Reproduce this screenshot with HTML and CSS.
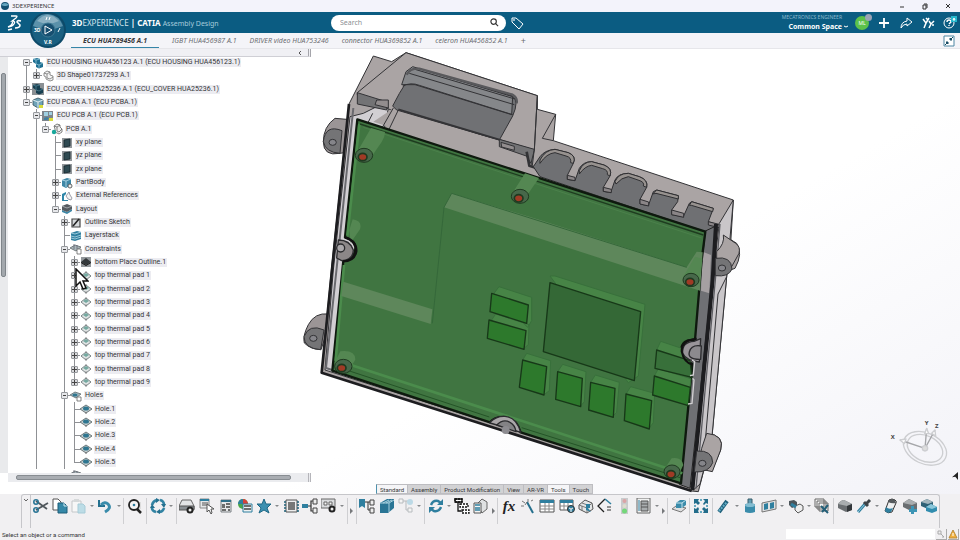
FILE: index.html
```html
<!DOCTYPE html>
<html lang="en">
<head>
  <meta charset="UTF-8" />
  <meta name="viewport" content="width=device-width, initial-scale=1.0"/>
  <title>3DEXPERIENCE</title>
  <link rel="stylesheet" href="styles.css">
</head>
<body>
  <!-- Icon sprite -->
  <svg class="sprite" aria-hidden="true">
    <symbol id="t-cubes" viewBox="0 0 12 12"><path d="M1 2l4-1 3 1v3l3 1v4l-4 1.500-3-1.500V7L1 5z" fill="#1d6f92"/><path d="M1 2l3 1 4-1M4 3v4l3 1 4-2M7 8v3" fill="none" stroke="#8fc3d6" stroke-width=".8"/></symbol>
    <symbol id="t-cubes-dark" viewBox="0 0 12 12"><path d="M0 0h12v12H0z" fill="#8b9094"/><path d="M1 2l4-1 3 1v3l3 1v4l-4 1.500-3-1.500V7L1 5z" fill="#173f50"/><path d="M1 2l3 1 4-1M4 3v4l3 1 4-2" fill="none" stroke="#4d7f91" stroke-width=".8"/></symbol>
    <symbol id="t-shape" viewBox="0 0 12 12"><path d="M2 3l3-2 3 1v3l3 1v4l-3 1-4-2V7L2 6z" fill="#f4f4f4" stroke="#777" stroke-width=".8"/><path d="M2 3l3 1 3-2M5 4v4l3 1 3-2" fill="none" stroke="#777" stroke-width=".8"/></symbol>
    <symbol id="t-asm" viewBox="0 0 12 12"><path d="M1 3l5-2 5 2v5l-5 3-5-3z" fill="#6fa3b8" stroke="#35525e" stroke-width=".8"/><path d="M1 3l5 2 5-2M6 5v6" fill="none" stroke="#e8f2f5" stroke-width=".9"/><path d="M7 8h4v3H7z" fill="#d8dc3c"/></symbol>
    <symbol id="t-pcb" viewBox="0 0 12 12"><path d="M0 1h11v10H0z" fill="#7d858c"/><path d="M2 2h4v4H2zM7 2h3v3H7z" fill="#9fd0e2"/><path d="M2 8l3-1 2 1-2 2H2z" fill="#3f7fa0"/><path d="M7 8h4v3H7z" fill="#d8dc3c"/></symbol>
    <symbol id="t-part" viewBox="0 0 12 12"><path d="M3 3l3-2 3 1v2l2 2v3l-3 2-4-2V6z" fill="#eee" stroke="#666" stroke-width=".8"/><path d="M3 3l3 1 3-2M6 4v4l2 1 3-3" fill="none" stroke="#666" stroke-width=".8"/><circle cx="3" cy="9" r="2.200" fill="#18a79b"/></symbol>
    <symbol id="t-plane" viewBox="0 0 12 12"><path d="M1 1h10v10H1z" fill="#92979b"/><path d="M3 3l6-1v7l-6 1z" fill="#2f4a52" stroke="#14262c" stroke-width=".8"/></symbol>
    <symbol id="t-body" viewBox="0 0 12 12"><path d="M1 3l5-2 4 1v6l-5 3-4-2z" fill="#3e87a6"/><path d="M1 3l4 1 5-2M5 4v6" fill="none" stroke="#bfe0ec" stroke-width=".8"/><circle cx="9" cy="9" r="2" fill="#eee" stroke="#555" stroke-width=".9"/></symbol>
    <symbol id="t-ext" viewBox="0 0 12 12"><path d="M1 4l4-2v2L3 6v4h4v1H1z" fill="#2f86a8"/><path d="M5 6l3-4 1 3 2 3-1 2-3-1z" fill="#f2f2f2" stroke="#778" stroke-width=".7"/></symbol>
    <symbol id="t-stack" viewBox="0 0 12 12"><path d="M1 7l5 2 5-3v2l-5 3-5-2z" fill="#3e87a6"/><path d="M1 3l5-2 5 2v3L6 9 1 7z" fill="#555b60"/><path d="M1 3l5 2 5-2" fill="none" stroke="#a8adb1" stroke-width=".9"/></symbol>
    <symbol id="t-sketch" viewBox="0 0 12 12"><path d="M2 2h8v8H2z" fill="#d6d9db" stroke="#444" stroke-width="1.200"/><path d="M3 9l6-7" stroke="#222" stroke-width="1.600"/></symbol>
    <symbol id="t-layer" viewBox="0 0 12 12"><path d="M1 3l6-2 4 1v7l-6 2-4-1z" fill="#2f7f9f"/><path d="M1 3l4 1 6-2M1 6l4 1 6-2M1 8l4 1 6-2" fill="none" stroke="#b5dbe8" stroke-width=".8"/></symbol>
    <symbol id="t-cons" viewBox="0 0 12 12"><path d="M0 5l5-3 6 2-5 4z" fill="#a9b6b8" stroke="#5e6769" stroke-width=".8"/><path d="M4 1v5M7 2v4" stroke="#667" stroke-width=".8"/><path d="M7 6h4v5H7z" fill="#fff" stroke="#666" stroke-width=".8"/></symbol>
    <symbol id="t-place" viewBox="0 0 12 12"><path d="M1 1h10v10H1z" fill="#92979b"/><path d="M1 6l5-4 5 4-5 3z" fill="#33383b"/><path d="M1 6v1l5 3 5-3V6L6 9z" fill="#111"/></symbol>
    <symbol id="t-pad" viewBox="0 0 12 12"><path d="M1 6l5-4 5 4-5 4z" fill="#dfe3e3" stroke="#6d7779" stroke-width=".9"/><path d="M3 5l3-2 3 2-3 2z" fill="#74a8a0"/><path d="M6 1v2M6 8v3" stroke="#888" stroke-width=".8"/></symbol>
    <symbol id="t-hole" viewBox="0 0 12 12"><path d="M0 6l6-4 6 4-6 4z" fill="#c3cccd" stroke="#5f6b6e" stroke-width=".9"/><ellipse cx="6" cy="5.500" rx="3" ry="2" fill="#2f7690"/><path d="M6 9v2" stroke="#777"/></symbol>
    <symbol id="t-holes" viewBox="0 0 12 12"><path d="M0 5l5-3 6 2-5 4z" fill="#9fb6bd" stroke="#5f6b6e" stroke-width=".8"/><ellipse cx="5" cy="5" rx="2.500" ry="1.500" fill="#2f7690"/><path d="M7 7h4v4H7z" fill="#fff" stroke="#666" stroke-width=".8"/></symbol>

    <symbol id="cut" viewBox="0 0 16 16"><path d="M3 3l11 8M3 12l12-7" stroke="#50575c" stroke-width="1.800"/><circle cx="3" cy="4" r="2.200" fill="none" stroke="#2a7595" stroke-width="1.600"/><circle cx="3" cy="12" r="2.200" fill="none" stroke="#2a7595" stroke-width="1.600"/></symbol>
    <symbol id="copy" viewBox="0 0 16 16"><path d="M1 1h5l3 3v8H1z" fill="#fff" stroke="#555" /><path d="M6 5h6l3 3v7H6z" fill="#3588a8" stroke="#1d5d78"/><path d="M12 5v3h3" fill="none" stroke="#cfe7ef"/></symbol>
    <symbol id="paste" viewBox="0 0 16 16"><path d="M1 3h9v11H1z" fill="#f7f7f7" stroke="#c4c7c9"/><path d="M3 1h5v3H3z" fill="#d6d9da"/><path d="M7 6h5l2 2v7H7z" fill="#bcdce6" stroke="#a6cbd7"/></symbol>
    <symbol id="undo" viewBox="0 0 16 16"><path d="M2 2v6h6" fill="none" stroke="#24708f" stroke-width="2"/><path d="M4 7q4-4 7-1 4 4-3 8" fill="none" stroke="#3a8cab" stroke-width="3"/></symbol>
    <symbol id="find" viewBox="0 0 16 16"><path d="M10 4h4v7h-4z" fill="#ddd"/><circle cx="7" cy="7" r="5" fill="#f4f4f4" stroke="#222" stroke-width="1.800"/><path d="M10 11l4 4" stroke="#222" stroke-width="2.500"/><circle cx="7" cy="7" r="1.300" fill="#2d7c9c"/></symbol>
    <symbol id="sync" viewBox="0 0 16 16"><path d="M2 7q1-4 5-5M10 2q4 1 4 5M14 10q-1 4-5 4M6 14q-4-1-4-4" fill="none" stroke="#3283a3" stroke-width="2.600"/><path d="M6 0l4 2-4 3zM11 6h5l-2 4zM10 11v5l-4-2zM0 10h5L2 6z" fill="#24708f"/></symbol>
    <symbol id="disk" viewBox="0 0 16 16"><path d="M3 2h9l3 6v3H0V8z" fill="#e3e4e6" stroke="#666"/><path d="M0 8h15v4H0z" fill="#8b9094" stroke="#555"/><circle cx="11" cy="12" r="2.500" fill="#eee" stroke="#222" stroke-width="2"/></symbol>
    <symbol id="select" viewBox="0 0 16 16"><path d="M1 1h9v9H1z" fill="#e6e8e9" stroke="#888"/><path d="M1 1h9v2H1z" fill="#2f7f9f"/><path d="M3 5h6M3 7h6" stroke="#555"/><path d="M8 6v8l2-2 2 4 1-1-1-4h3z" fill="#fff" stroke="#555"/></symbol>
    <symbol id="calc" viewBox="0 0 16 16"><path d="M3 2h10v12H3z" fill="#e7e8ea" stroke="#7b8084"/><path d="M3 2h10v2H3z" fill="#2f6f8a"/><path d="M4 7h3M8 6h4M4 9h3M8 9h4M4 12h4M10 12h2" stroke="#444" stroke-width="1.500"/></symbol>
    <symbol id="color" viewBox="0 0 16 16"><circle cx="6" cy="6" r="5" fill="#4aa648"/><path d="M6 6V1a5 5 0 0 1 5 5z" fill="#d8413a"/><path d="M6 6H1a5 5 0 0 1 5-5z" fill="#2f7f9f"/><path d="M6 6h9v8H6z" fill="#eef1f2" stroke="#2f7f9f"/><path d="M7 8h7M7 11h7" stroke="#444" stroke-width="1.500"/></symbol>
    <symbol id="star" viewBox="0 0 16 16"><path d="M8 1l2 5h5l-4 4 2 5-5-3-5 3 2-5-4-4h5z" fill="#3b8fb0" stroke="#1f6885"/></symbol>
    <symbol id="chip" viewBox="0 0 16 16"><path d="M3 2h11v12H3z" fill="#eee" stroke="#555"/><path d="M5 4h7v8H5z" fill="#777"/><path d="M2 3v11M15 3v11" stroke="#1f6078" stroke-width="1.500" stroke-dasharray="2 1"/></symbol>
    <symbol id="link" viewBox="0 0 16 16"><path d="M6 8h3V3h2M9 8v5h2" fill="none" stroke="#333" stroke-width="1.200"/><path d="M11 1h4v5h-4zM11 10h4v5h-4z" fill="#eee" stroke="#444"/><path d="M0 6h6v4H0z" fill="#2f7f9f"/></symbol>
    <symbol id="board" viewBox="0 0 16 16"><path d="M0 1h14v9H0z" fill="#dadcde" stroke="#666"/><path d="M3 4h3v3H3zM8 4h3v3H8z" fill="#f5f5f5" stroke="#666"/><circle cx="11" cy="11" r="2.500" fill="#eee" stroke="#222" stroke-width="2"/></symbol>
    <symbol id="treeflag" viewBox="0 0 16 16"><path d="M0 1h6v9l-3-2-3 2z" fill="#2f7f9f"/><path d="M6 4h6M9 4v8h3" fill="none" stroke="#333"/><path d="M11 2h4v5h-4zM11 10h4v5h-4z" fill="#eee" stroke="#444"/></symbol>
    <symbol id="books" viewBox="0 0 16 16"><path d="M1 5l7-4h7v9l-6 5H1z" fill="#2a7595"/><path d="M4 5l6-3M7 5l6-3M1 5h9v9M10 5l5-3" fill="none" stroke="#a9d2e0"/></symbol>
    <symbol id="treefade" viewBox="0 0 16 16"><path d="M5 3h5M8 3v9h3" fill="none" stroke="#b7bbbe"/><path d="M1 1h4v4H1zM10 10h4v4h-4z" fill="#f4f4f4" stroke="#b7bbbe"/><circle cx="12" cy="4" r="3" fill="#bcd9e6"/></symbol>
    <symbol id="refresh" viewBox="0 0 16 16"><path d="M3 7q2-5 7-4l3 2M13 9q-2 5-7 4l-3-2" fill="none" stroke="#2f7f9f" stroke-width="2.400"/><path d="M15 1v6H9zM1 15V9h6z" fill="#2f7f9f"/></symbol>
    <symbol id="struct" viewBox="0 0 16 16"><path d="M1 1h7v3H1zM6 6h8v3H6zM8 12h7v3H8z" fill="#fff" stroke="#111" stroke-dasharray="2 1" stroke-width="1.300"/><path d="M1 1h7v3H1zM4 4v9h3" fill="none" stroke="#111" stroke-width="1.300"/></symbol>
    <symbol id="report" viewBox="0 0 16 16"><path d="M4 6l5-5 5 3v7l-5 4z" fill="#dfe1e2" stroke="#666"/><path d="M1 5h7v10H1z" fill="#f4f4f4" stroke="#555"/><path d="M2 7h5M2 10h5M2 12h5" stroke="#2f7f9f" stroke-width="1.500"/></symbol>
    <symbol id="wand" viewBox="0 0 16 16"><path d="M7 4l6 11" stroke="#256f8d" stroke-width="2"/><path d="M8 1v3M2 3l3 2M1 8h3M11 3l2-1M7 4L5 7" stroke="#777"/></symbol>
    <symbol id="table" viewBox="0 0 16 16"><path d="M1 2h14v12H1z" fill="#fff" stroke="#555"/><path d="M1 2h14v3H1z" fill="#2f7f9f"/><path d="M1 8h14M1 11h14M6 5v9M10 5v9" stroke="#888"/></symbol>
    <symbol id="tablegear" viewBox="0 0 16 16"><path d="M1 2h13v10H1z" fill="#fff" stroke="#555"/><path d="M1 2h13v3H1z" fill="#2f7f9f"/><path d="M1 8h13M5 5v7M9 5v7" stroke="#888"/><circle cx="12" cy="11" r="3.500" fill="#2f7f9f" stroke="#333"/><path d="M10 10l2 1 2-1M12 11v3" stroke="#fff"/></symbol>
    <symbol id="tablebox" viewBox="0 0 16 16"><path d="M1 7l6-5 7 3 1 6-6 4-8-4z" fill="#e4e6e7" stroke="#555"/><path d="M1 7l8 3 5-5M4 5l8 3M9 10v5M4 8v5" stroke="#777" fill="none"/><path d="M8 6h4v4h-2l3 4-5-2z" fill="#2f7f9f"/></symbol>
    <symbol id="rule" viewBox="0 0 16 16"><path d="M8 1L1 8l6 6" fill="none" stroke="#222" stroke-width="1.300"/><path d="M8 1l6 5" stroke="#2f7f9f" stroke-width="1.600"/><path d="M10 9h4M10 12h4" stroke="#333"/></symbol>
    <symbol id="light" viewBox="0 0 16 16"><path d="M5 0h7v16H5z" fill="#c9cbcd"/><circle cx="8.500" cy="3" r="2" fill="#dba3a5"/><circle cx="8.500" cy="8" r="2" fill="#dedccd"/><circle cx="8.500" cy="13" r="2.500" fill="#74d77a"/></symbol>
    <symbol id="cyl" viewBox="0 0 16 16"><path d="M1 0h13v15H1z" fill="#f0f1f1" stroke="#666"/><path d="M5 3h7v10H5z" fill="#a9adaf" stroke="#555"/><path d="M5 6h7M5 9h7" stroke="#555"/><path d="M3 2v11" stroke="#2f7f9f"/></symbol>
    <symbol id="boxplate" viewBox="0 0 16 16"><path d="M1 11l4-3 10 2-5 4z" fill="#dedfe0" stroke="#777"/><path d="M5 5l4-3h6v5l-4 3H5z" fill="#3a8cab"/><path d="M5 5h6v5M11 5l4-3" fill="none" stroke="#c5e2ec"/></symbol>
    <symbol id="arrows" viewBox="0 0 16 16"><path d="M1 1h5L5 3l2 2-2 2-2-2-2 1zM15 1v5l-2-1-2 2-1-1 2-3-2-2zM1 15v-5l2 1 2-2 1 2-1 2 1 2zM15 15h-5l1-2-2-2 2-2 2 2 2-1z" fill="#236d8b"/><path d="M8 1v2M8 13v2M1 8h2M13 8h2" stroke="#67a9c0" stroke-width="2"/></symbol>
    <symbol id="pipe" viewBox="0 0 16 16"><path d="M4 14L12 3" stroke="#1f607a" stroke-width="4"/><path d="M4 13l8-9" stroke="#62abc5" stroke-width="2" stroke-dasharray="2 1"/></symbol>
    <symbol id="bolt" viewBox="0 0 16 16"><path d="M6 1h4v5H6z" fill="#629eb4" stroke="#365c6b"/><path d="M3 6h10v8q-5 2-10 0z" fill="#3a8cab"/><ellipse cx="8" cy="7" rx="5" ry="2" fill="#84bdd1"/></symbol>
    <symbol id="mirror" viewBox="0 0 16 16"><path d="M1 5l14-3v9L1 14z" fill="#dfe1e2" stroke="#777"/><path d="M3 6l4-1v6l-4 1zM9 5l4-1v6l-4 1z" fill="#2f7f9f"/></symbol>
    <symbol id="cubes2" viewBox="0 0 16 16"><path d="M1 3l5-1 3 2v4l-5 2-3-3z" fill="#4b555a"/><path d="M7 8l5-2 3 2v4l-5 3-3-3z" fill="#eee" stroke="#555"/><path d="M3 6l5 3" stroke="#2f7f9f" stroke-width="3"/></symbol>
    <symbol id="layers" viewBox="0 0 16 16"><path d="M1 1h9v8H1zM3 3h9v8H3zM5 5h9v8H5z" fill="#f4f4f4" stroke="#666"/><path d="M7 8l7 7M14 7l-6 7" stroke="#235f78" stroke-width="2"/></symbol>
    <symbol id="solid" viewBox="0 0 16 16"><path d="M1 6q3-4 6-4l8 4v6l-6 2-8-4z" fill="#6b6f72"/><path d="M1 6q3-4 6-4l8 4-5 2z" fill="#a9adaf"/><path d="M10 8l5-2v6l-5 2z" fill="#33373a"/></symbol>
    <symbol id="picker" viewBox="0 0 16 16"><path d="M2 14l7-8" stroke="#2f7f9f" stroke-width="3"/><path d="M2 14l7-8" stroke="#9dcfe0"/><path d="M8 4l4 4M10 6l4-4" stroke="#3d4347" stroke-width="3"/></symbol>
    <symbol id="eraser" viewBox="0 0 16 16"><path d="M7 2q3-2 6 0 2 1 1 3l-4 9q-4 2-7-1z" fill="#eef0f1" stroke="#333"/><path d="M4 9q3 3 7 1l-2 4q-4 2-6-1z" fill="#2f7f9f"/><path d="M7 2q3-2 6 0l1 3q-4 1-8-1z" fill="#555a5d"/></symbol>
    <symbol id="solidadd" viewBox="0 0 16 16"><path d="M1 5l6-4 8 4v6l-6 2-8-4z" fill="#6a6e71"/><path d="M1 5l6-4 8 4-5 2z" fill="#a9adaf"/><path d="M9 8h3v3h3v3h-3v2H9v-2H7v-3h2z" fill="#3d95b5"/></symbol>
    <symbol id="soliddup" viewBox="0 0 16 16"><path d="M0 4l6-3 6 3v5l-5 2-7-3z" fill="#2f6176"/><path d="M0 4l6-3 6 3-5 2z" fill="#a4b6bd"/><path d="M5 9l5-3 6 3v4l-5 2-6-2z" fill="#318cae"/><path d="M5 9l5-3 6 3-5 2z" fill="#8cc7da"/></symbol>
  </svg>

  <!-- Window title -->
  <header class="titlebar">
    <svg class="app-icon" viewBox="0 0 8 8"><circle cx="4" cy="4" r="4" fill="#154f70"/><path d="M0 3q4-4 8 0l-3 1H3z" fill="#65a4be"/></svg>
    <span>3DEXPERIENCE</span>
    <div class="window-buttons">
      <button aria-label="Minimize"><svg viewBox="0 0 8 8"><path d="M2 5h4"/></svg></button>
      <button aria-label="Restore"><svg viewBox="0 0 8 8"><path d="M2 3h3v4H2zM3 2h3v4"/></svg></button>
      <button aria-label="Close"><svg viewBox="0 0 8 8"><path d="M2 2l4 4M6 2L2 6"/></svg></button>
    </div>
  </header>

  <!-- Top bar -->
  <div class="topbar">
    <svg class="ds-logo" viewBox="0 0 16 16" fill="none" stroke="#fff"><path d="M4 1h5q2 0 0 2L5 6q4 0 2 3t-6 3q4-1 5-6" stroke-width="1.300"/><path d="M14 6q-4-1-4 1l3 3q0 3-5 3M1 15l4-1" stroke-width="1.600"/></svg>
    <div class="brand"><b>3D</b>EXPERIENCE <b>| CATIA</b> <span>Assembly Design</span></div>
    <div class="search">
      <input type="search" placeholder="Search" aria-label="Search">
      <button aria-label="Run search"><svg viewBox="0 0 10 10"><circle cx="4" cy="4" r="3"/><path d="M6 6l3 3"/></svg></button>
    </div>
    <button class="bar-btn" aria-label="Tags"><svg viewBox="0 0 14 14"><path d="M2 2h4l7 6-4 5-7-7z"/><circle cx="4" cy="4" r=".5"/></svg></button>
    <div class="account">
      <span class="role">MECATRONICS ENGINEER</span>
      <button class="space">Common Space<svg viewBox="0 0 6 6"><path d="M1 2q2 2 4 0"/></svg></button>
    </div>
    <div class="actions">
      <div class="avatar">ML<i></i></div>
      <button class="bar-btn" aria-label="Add"><svg viewBox="0 0 14 14"><path d="M7 2v10M2 7h10" stroke-width="1.800"/></svg></button>
      <button class="bar-btn" aria-label="Share"><svg viewBox="0 0 14 14"><path d="M8 2l5 4-5 4V8q-4 0-6 4 0-6 6-7z"/></svg></button>
      <button class="bar-btn" aria-label="Communities"><svg viewBox="0 0 14 14"><path d="M2 3l3 4-2 5M8 2L5 7M8 5l2 3-2 4M13 5l-3 3M5 2l2 2M11 9h2" stroke-width="1.500"/></svg></button>
      <button class="bar-btn" aria-label="Help"><svg viewBox="0 0 14 14"><circle cx="6" cy="7" r="5"/><path d="M4 6q0-2 2-2t2 2l-2 2M6 9v1" stroke-width="1.400"/><path d="M8 0h6v6H8z" fill="#25b7cc" stroke="none"/><path d="M11 2l1 2h-2z"/></svg></button>
    </div>
  </div>

  <!-- Open documents -->
  <nav class="doc-tabs">
    <a href="#" class="active">ECU HUA789456 A.1</a>
    <a href="#">IGBT HUA456987 A.1</a>
    <a href="#">DRIVER video HUA753246</a>
    <a href="#">connector HUA369852 A.1</a>
    <a href="#">celeron HUA456852 A.1</a>
    <a href="#" class="add">+</a>
    <button class="collapse" aria-label="Exit full view"><svg viewBox="0 0 12 12"><path d="M1 1h10v10H1z" fill="#fff" stroke="#4f87a3"/><path d="M7 3v2h2zM5 9V7H3z" fill="#174a63" stroke="#174a63"/><path d="M7 5l3-3M5 7l-3 3" stroke="#174a63"/></svg></button>
  </nav>
  <svg class="compass" viewBox="0 0 36 36">
    <circle cx="18" cy="18" r="18" fill="#0d4a69"/>
    <circle cx="18" cy="18" r="16" fill="#1a5f80"/>
    <path d="M3 14Q7 1 18 2t15 12q-15 7-30 0z" fill="#5b91aa"/>
    <path d="M7 9q11-12 22 0-11 5-22 0z" fill="#8ab0c2"/>
    <circle cx="18" cy="18" r="7" fill="#174f70" stroke="#3d7893"/>
    <path d="M15 14l7 4-7 4z" fill="none" stroke="#fff"/>
    <path d="M17 5l-1 3M20 5l-1 3M30 16l-2 4" stroke="#fff"/>
    <text x="4" y="20">3D</text><text x="14" y="32">V.R</text>
  </svg>

  <main class="stage">
    <!-- 3D view -->
    <svg class="model" viewBox="0 0 2880 1335" role="img" aria-label="ECU housing with circuit board">
      <g transform="translate(0 -147)" stroke="#333336" stroke-width="3" stroke-linejoin="round">
        <!-- mounting lugs -->
        <path d="M1040 358l-35-3q-35 25-35 70t50 35l20-3z" fill="#9b9596"/>
        <path d="M1026 392q-50-20-56 33 6 32 50 35z" fill="#747476"/>
        <ellipse cx="998" cy="427" rx="11" ry="9" fill="#85858a"/>
        <path d="M985 942q-40-5-60 32-18 35-12 55 20 20 50 20l20-60z" fill="#9b9596"/>
        <path d="M972 990q-45-20-60 20 0 35 50 39z" fill="#747476"/>
        <ellipse cx="940" cy="1015" rx="11" ry="9" fill="#85858a"/>
        <path d="M2170 705l40 25q20 30-5 75l-55 20z" fill="#aaa4a4"/>
        <path d="M2120 1300q55 5 42 50l-25 60-50-5z" fill="#aaa4a4"/>
        <!-- housing body and right wall -->
        <path d="M1047 312l73-144 55 17 43-27 394 129v41l55 15-7 79 540 178-8 130-12 100-45 490-40 155-20-2-1110-355 30-318z" fill="#aaa4a4"/>
        <path d="M2200 600l-42 70-23 190-55 610 20-18 35-132 45-490z" fill="#c9c6c9"/>
        <path d="M2180 830l-26 52-38 440 19-2M1627 415l40-72M1660 422l-33-7" fill="none"/>
        <path d="M1170 300l-80 40-40 10-50 460-25 300 1100 350-10-40L1010 1100z" fill="#d2cfd3"/>
        <path d="M1047 312l-50 488-32 318 1110 355" fill="none" stroke="#1d1d20" stroke-width="8"/>
        <path d="M1060 324l-50 480-32 300 1090 350" fill="none" stroke="#69696e" stroke-width="6"/>
        <!-- handle -->
        <path d="M1072 278l146-120 394 129-9 163-100-30-330-90-101-45z" fill="#aaa4a4"/>
        <path d="M1198 313l-78 52 960 320 35 8-470-150-25-55-122-60z" fill="#aaa4a4" stroke="none"/>
        <path d="M1178 318q20-40 40-70 18-40 45-40l275 80q20 15 0 60l-40 72-308-90z" fill="#707174"/>
        <path d="M1218 215l20-15 300 90-3 54-290-90-40 0z" fill="#85878a"/>
        <path d="M1208 258q25-12 50-2l280 88M1228 220l315 94M1238 206l310 92" fill="none"/>
        <path d="M1220 224q10-20 38-18l280 78q15 8 12 26" fill="none" stroke="#59595c" stroke-width="7"/>
        <path d="M1072 278l90 28-2 24-88-18zM1498 418l105 30-6 48-18-28-81-28z" fill="#737375"/>
        <path d="M1130 300h35v24l-40-10zM1503 427l40 12v12l-38-10z" fill="#928d8e"/>
        <path d="M1180 324l-33 58M1195 330l-28 58M1118 340l-15 30" fill="none"/>
        <path d="M1195 328l303 91" fill="none" stroke-width="5"/>
        <path d="M1580 455l8 42 30 10" fill="none" stroke-width="8"/>
        <path d="M1612 287l-9 163-10 40" fill="none"/>
      </g>

      <!-- connector cut-outs -->
      <g transform="translate(1560 3)" stroke="#2f2f32" stroke-width="3" stroke-linejoin="round">
        <path d="M40 350L60 320Q75 300 105 298L145 308Q170 318 160 340L142 376V388L165 392L178 355Q190 335 215 335L252 345Q278 355 270 378L250 412V424L272 428L285 390Q295 370 325 370L358 380Q385 390 380 412L360 448V462L385 467L400 425L410 420L475 437L473 455L455 480V494L490 500L508 460L515 455L580 475L565 515L595 525L580 610L556 600V545L60 380Z" fill="#6f7073"/>
        <path d="M60 330Q75 300 105 298L145 308Q170 318 160 340L152 338Q155 322 138 318L105 308Q80 310 60 340ZM178 362Q190 335 215 335L252 345Q278 355 270 378L262 374Q265 360 248 356L215 346Q195 348 178 372ZM285 395Q295 370 325 370L358 380Q385 390 380 412L370 408Q375 396 354 390L325 380Q305 382 288 402ZM398 432L410 420 475 437V447L408 430ZM508 466L515 455 580 475 578 485 514 466Z" fill="#97928f"/>
        <path d="M142 376l23 6v10l-23-4zM250 412l24 6v10l-24-4zM360 448l26 8v12l-26-6zM455 480l36 10v12l-36-8zM565 515l32 8v10l-32-8z" fill="#8a8587"/>
      </g>

      <g transform="translate(0 -147)" stroke-linejoin="round">
        <!-- right rail -->
        <path d="M2116 693l30-14-10 160-66 626-32-12z" fill="#6f7074" stroke="#222" stroke-width="3"/>
        <path d="M2108 755l25 10-5 115-25-8z" fill="#a5a0a2"/>
        <path d="M2148 672l-10 168-61 630" fill="none" stroke="#1d1d20" stroke-width="12"/>
        <path d="M2160 672l-14 168-58 625" fill="none" stroke="#5b5b60" stroke-width="4"/>
        <!-- board -->
        <path d="M1072 358L2116 695 2105 780 2085 1020Q2045 1015 2043 1052 2050 1085 2077 1092L2043 1450 1562 1297Q1550 1255 1515 1252 1485 1250 1470 1267L997 1112 1030 782Q1068 775 1066 740 1060 718 1035 712Z" fill="#407541" stroke="#0e190e" stroke-width="7"/>
        <path d="M1078 372l-36 335M1032 795l-25 285 1040 340" fill="none" stroke="#4b8c4c" stroke-width="8"/>
        <path d="M1003 1098l465 153M1565 1283l475 150" fill="none" stroke="#245427" stroke-width="3"/>
        <path d="M1080 372l1030 333" fill="none" stroke="#1e3c1f" stroke-width="4"/>
        <path d="M1090 382l1015 332" fill="none" stroke="#4b814b" stroke-width="3"/>
        <!-- raised ribs seen through the board -->
        <path d="M1355 580l265 80 440 142 30-47 18 2-8 115L1332 622z" fill="#5e875b"/>
        <path d="M1030 845l267 83-5 44-268-84z" fill="#5e875b"/>
        <path d="M1355 580l-23 42-35 348M1355 580l705 222" fill="none" stroke="#35683a" stroke-width="3"/>
        <path d="M1068 462l45-78 42 12q0 15-10 30l-40 58zM1537 580l38-60 42 14-45 65zM2050 830l35-60 22 6-10 75zM1003 1090l18-36q45-5 45 25l-25 40zM1995 1405l20-30q30-5 35 20l-20 40zM1048 690l10-32q30 5 22 30l-28 40z" fill="#548752"/>
        <!-- fixing holes -->
        <g stroke="#1f3a20" stroke-width="3">
          <g fill="#47684a"><ellipse cx="1092" cy="466" rx="26" ry="21"/><ellipse cx="1560" cy="589" rx="26" ry="21"/><ellipse cx="2073" cy="840" rx="24" ry="20"/><ellipse cx="1030" cy="1099" rx="26" ry="21"/><ellipse cx="2016" cy="1415" rx="24" ry="20"/></g>
          <g fill="#a03a25" stroke-width="5"><ellipse cx="1088" cy="471" rx="13" ry="11"/><ellipse cx="1556" cy="595" rx="13" ry="11"/><ellipse cx="2070" cy="846" rx="13" ry="11"/><ellipse cx="1025" cy="1104" rx="13" ry="11"/><ellipse cx="2013" cy="1423" rx="13" ry="11"/></g>
        </g>
        <!-- components -->
        <g fill="#478446" stroke="#38703b" stroke-width="3">
          <path d="M1665 828l270 85-20 215-30 20-235-320zM1482 880l15-20 98 32v70l-12 20zM1475 960l12-18 100 32-2 60-12 10zM1568 1080l12-20 72 22-4 90-16 12zM1673 1115l15-22 70 22-5 90-12 14zM1772 1147l14-22 72 22-8 90-14 14zM1878 1182l14-22 72 20-4 88-14 18zM1970 1050l12-26 90 30-8 40zM1963 1128l12-22 98 30-6 50z"/>
        </g>
        <g fill="#2d792c" stroke="#173818" stroke-width="4">
          <path d="M1650 848l272 87-19 207-273-87z" fill="#346836"/>
          <path d="M1475 880l110 35-5 55-110-35zM1467 960l111 32-6 56-110-33zM1568 1080l72 20-8 85-74-23zM1673 1115l74 20-5 85-75-22zM1772 1147l73 18-5 87-74-22zM1878 1182l77 20-7 85-75-25zM1963 1128l108 34-6 55-107-32z"/>
          <path d="M1970 1050l100 32 6 50-111-27z" fill="#38703a"/>
        </g>
        <!-- edge clips -->
        <g stroke="#2b2b2e" stroke-width="4">
          <path d="M1015 720q35 0 45 30 0 30-35 32l-15-8z" fill="#8c8788"/><circle cx="1022" cy="744" r="12" fill="#aaa7aa"/>
          <path d="M1035 712q35 10 34 42-6 30-40 30" fill="none" stroke="#111" stroke-width="7"/>
          <path d="M2102 1016l-20 8q-36 2-34 36 10 22 50 26z" fill="#99959a"/>
          <path d="M2104 1038q-30-5-36 18t34 22z" fill="#8c8a8e"/>
          <path d="M2090 1016q-45 4-45 38 6 32 32 40" fill="none" stroke="#111" stroke-width="6"/>
          <path d="M1470 1267q20-20 45-18 35 3 47 48l-36-12-56-16z" fill="#aaa6a9"/>
          <path d="M1490 1275q20-20 40-8 15 8 18 28z" fill="#838285"/><circle cx="1517" cy="1290" r="12" fill="#8c8b90" stroke="none"/>
          <path d="M2076 1080l8 5-4 40-10 2M2078 1135l4 5-6 70-12 2" fill="none" stroke="#d2d0d3"/>
        </g>
        <g stroke="#333336" stroke-width="3">
          <path d="M2170 705q5 25-20 50l0 20 45 25 22-40q5-20-10-30z" fill="#aaa4a4"/>
          <path d="M2146 775q48-8 50 32-10 25-50 20z" fill="#747476"/><ellipse cx="2166" cy="804" rx="11" ry="9" fill="#85858a"/>
          <path d="M2105 1345l15-45q55 5 42 50l-25 65-45-10z" fill="#aaa4a4"/>
          <path d="M2090 1353q48-3 48 35-10 30-55 28z" fill="#747476"/><ellipse cx="2107" cy="1390" rx="11" ry="9" fill="#85858a"/>
        </g>
        <!-- axis compass -->
        <g fill="none" stroke="#cdced1" stroke-width="4">
          <ellipse cx="2775" cy="1345" rx="68" ry="46" transform="rotate(25 2775 1345)"/>
          <ellipse cx="2775" cy="1345" rx="56" ry="38" transform="rotate(25 2775 1345)"/>
          <path d="M2775 1345l-75-25M2775 1345l5-60M2775 1345l30-55" stroke="#a5a6a9"/>
          <path d="M2700 1320l18-3-5 14zM2780 1285l6 16h-12zM2805 1290l2 18-12-8z" fill="#fff"/>
          <circle cx="2775" cy="1345" r="8" fill="#ddd"/>
        </g>
        <g class="axis"><text x="2672" y="1318">X</text><text x="2774" y="1276">Y</text><text x="2805" y="1283">Z</text></g>
        <path d="M2874 1416v24l-8-10-10 2z" fill="#222"/>
      </g>
    </svg>

    <!-- Specification tree -->
    <aside class="tree-panel">
      <div class="panel-head"><button aria-label="Hide tree"><svg viewBox="0 0 6 6"><path d="M4 1L2 3l2 2"/></svg></button></div>
      <div class="vscroll"><i></i></div>
      <ul class="tree" id="tree"></ul>
      <div class="hscroll"><i></i></div>
    </aside>
    <svg class="cursor" viewBox="0 0 14 22"><path d="M1 1v17l4-4 3 7 3-1-3-7h5z" fill="#fff" stroke="#111" stroke-width="1.500"/></svg>

    <nav class="section-tabs">
      <button class="active first">Standard</button><button>Assembly</button><button>Product Modification</button><button>View</button><button>AR-VR</button><button class="active">Tools</button><button>Touch</button>
    </nav>
  </main>

  <!-- Action bar -->
  <footer>
    <div class="toolbar">
      <button class="grip" aria-label="Toolbar options"><svg viewBox="0 0 6 6"><path d="M1 2l2 2 2-2"/></svg></button>
      <div class="tools" id="tools"></div>
    </div>
    <div class="status">
      <span>Select an object or a command</span>
      <input type="text" aria-label="Command">
      <button aria-label="Command history"><svg viewBox="0 0 10 10"><path d="M2 2h3v3H2zM5 5l3 3M6 8h2" fill="none" stroke="#aaa"/></svg></button>
      <button aria-label="Warnings"><svg viewBox="0 0 10 10"><path d="M5 1l4 8H1z" fill="#f4b13c" stroke="#b98a3a"/><path d="M5 4v3" stroke="#fff"/></svg></button>
    </div>
  </footer>

  <script>
    // [level, state, icon, label] - state: "-" open, "+" closed, "" leaf
    const rows = [
      [0, "-", "cubes", "ECU HOUSING HUA456123 A.1 (ECU HOUSING HUA456123.1)"],
      [1, "+", "shape", "3D Shape01737293 A.1"],
      [0, "+", "cubes-dark", "ECU_COVER HUA25236 A.1 (ECU_COVER HUA25236.1)"],
      [0, "-", "asm", "ECU PCBA A.1 (ECU PCBA.1)"],
      [1, "-", "pcb", "ECU PCB A.1 (ECU PCB.1)"],
      [2, "-", "part", "PCB A.1"],
      [3, "", "plane", "xy plane"],
      [3, "", "plane", "yz plane"],
      [3, "", "plane", "zx plane"],
      [3, "+", "body", "PartBody"],
      [3, "+", "ext", "External References"],
      [3, "-", "stack", "Layout"],
      [4, "+", "sketch", "Outline Sketch"],
      [4, "", "layer", "Layerstack"],
      [4, "-", "cons", "Constraints"],
      [5, "+", "place", "bottom Place Outline.1"]
    ];
    for (let n = 1; n <= 9; n++) rows.push([5, "+", "pad", "top thermal pad " + n]);
    rows.push([4, "-", "holes", "Holes"]);
    for (let n = 1; n <= 5; n++) rows.push([5, "", "hole", "Hole." + n]);
    rows.push([4, "", "cons", ""]);

    // does a level carry on below row i?
    function goesOn(level, i) {
      for (let j = i + 1; j < rows.length; j++) {
        if (rows[j][0] < level) return false;
        if (rows[j][0] === level) return true;
      }
      return level === 1;
    }

    document.getElementById("tree").innerHTML = rows.map(([level, state, icon, label], i) => {
      let cells = "";
      for (let k = 0; k < level; k++) {
        cells += `<i class="cell${goesOn(k, i) ? " line" : ""}"></i>`;
      }
      const last = goesOn(level, i) ? "" : " last";
      const box = state ? `<button class="box${state === "+" ? " closed" : ""}" aria-label="Toggle ${label}"></button>` : "";
      return `<li>${cells}<i class="cell node${i ? " line" : " first"}${last}">${box}</i>` +
        `<svg><use href="#t-${icon}"/></svg>${label ? `<span>${label}</span>` : ""}</li>`;
    }).join("");

    // "v" drop-down, "|" separator, ">" more
    const tools = "cut copy paste v undo v | find | sync v | disk select calc color star v chip link board v | > | " +
      "treeflag books treefade v | refresh v struct report > | fx wand table tablegear tablebox rule light cyl v > | " +
      "boxplate | arrows | pipe v bolt mirror v cubes2 v layers | solid picker v eraser solidadd soliddup";

    document.getElementById("tools").innerHTML = tools.split(" ").map(t => {
      if (t === "|") return '<i class="sep"></i>';
      if (t === "v") return '<button class="drop" aria-label="More"></button>';
      if (t === ">") return '<button class="more" aria-label="Expand"></button>';
      if (t === "fx") return '<button class="tool fx">fx</button>';
      return `<button class="tool" aria-label="${t}"><svg><use href="#${t}"/></svg></button>`;
    }).join("");
  </script>
</body>
</html>
```

FILE: styles.css
```css
:root {
  --bar: #0b5c82;
  --light: #f4f4f8;
  --text: #333437;
  --line: #8f9195;
  --narrow: Roboto, "Open Sans", sans-serif;
}

* { box-sizing: border-box; }

body {
  margin: 0;
  height: 100vh;
  display: flex;
  flex-direction: column;
  overflow: hidden;
  position: relative;
  font-family: "Noto Sans", "Open Sans", sans-serif;
  font-size: 7px;
  color: var(--text);
  background: #fff;
}

button {
  font: inherit;
  color: inherit;
  background: none;
  border: none;
  padding: 0;
}

a { color: inherit; text-decoration: none; }

svg { display: block; }

.sprite { position: absolute; width: 0; height: 0; }

/* title */
.titlebar {
  height: 12px;
  display: flex;
  align-items: center;
  gap: 3px;
  padding: 0 8px 0 1px;
  font-size: 6px;
  background: #f3f3fb;
}

.app-icon { width: 8px; height: 8px; }

.window-buttons { margin-left: auto; display: flex; gap: 15px; }

.window-buttons svg { width: 8px; height: 8px; fill: none; stroke: #333; }

/* top bar */
.topbar {
  height: 21px;
  display: flex;
  align-items: center;
  padding: 0 3px 0 7px;
  background: var(--bar);
  color: #fff;
}

.ds-logo { width: 16px; height: 16px; }

.brand {
  width: 259px;
  padding-left: 49px;
  font-size: 8px;
  white-space: nowrap;
  color: #d6e6ee;
}

.brand b { color: #fff; }

.brand span { font-size: 7px; color: #a5cbdc; }

.search {
  width: 175px;
  height: 16px;
  margin-left: 49px;
  margin-right: 4px;
  padding: 0 7px 0 9px;
  display: flex;
  align-items: center;
  border-radius: 8px;
  background: #fff;
}

.search input {
  flex: 1;
  min-width: 0;
  border: none;
  padding: 0;
  font: inherit;
  outline: none;
}

.search input::placeholder { color: #8c8f93; }

.search svg { width: 9px; height: 9px; fill: none; stroke: #333; stroke-width: 1.300; }

.bar-btn svg { width: 14px; height: 14px; fill: none; stroke: #fff; }

.account {
  margin-left: auto;
  display: flex;
  flex-direction: column;
  align-items: flex-end;
}

.role { padding-right: 7px; font-size: 5px; line-height: 8px; color: #8dbace; }

.space {
  display: flex;
  align-items: center;
  gap: 1px;
  font-size: 7px;
  font-weight: bold;
  line-height: 11px;
  white-space: nowrap;
}

.space svg { width: 6px; height: 6px; fill: none; stroke: #fff; }

.actions { display: flex; align-items: center; gap: 8px; margin-left: 6px; }

.avatar {
  position: relative;
  width: 14px;
  height: 14px;
  border-radius: 50%;
  background: #5cc14a;
  font-size: 5px;
  line-height: 14px;
  text-align: center;
}

.avatar i {
  position: absolute;
  top: -2px;
  right: -3px;
  width: 7px;
  height: 7px;
  border-radius: 50%;
  background: #9aa3b5;
}

.compass {
  position: absolute;
  left: 30px;
  top: 12px;
  width: 36px;
  height: 36px;
}

.compass text { font-size: 5px; font-weight: bold; fill: #fff; }

/* documents */
.doc-tabs {
  height: 16px;
  display: flex;
  align-items: stretch;
  gap: 13px;
  padding: 0 5px 0 71px;
  line-height: 16px;
  font-style: italic;
  white-space: nowrap;
  color: #6b6d71;
  background: var(--light);
  border-bottom: 1px solid #e6e6ea;
}

.doc-tabs .active {
  padding: 0 12px;
  font-weight: bold;
  color: #37393c;
  border-bottom: 1px solid #3585a8;
}

.doc-tabs .add { font-style: normal; font-size: 9px; }

.collapse { margin-left: auto; }

.collapse svg { width: 12px; height: 12px; }

/* 3D view with the tree on top */
.stage {
  flex: 1;
  min-height: 0;
  display: grid;
  grid-template: minmax(0, 1fr) / minmax(0, 1fr);
  background: linear-gradient(150deg, #fff 60%, #f3f3f8);
  position: relative;
}

.stage > * { grid-area: 1 / 1; }

.model { width: 100%; height: 100%; }

.axis text { font-size: 18px; font-weight: bold; fill: #444; }

.tree-panel {
  width: 311px;
  margin-bottom: 12px;
  display: grid;
  grid-template: 8px minmax(0, 1fr) 9px / 8px minmax(0, 1fr);
  position: relative;
}

.panel-head {
  grid-column: 1 / 3;
  display: flex;
  justify-content: flex-end;
  padding-right: 5px;
  background: #f0f0f4;
  border-bottom: 1px solid #cfcfd5;
  border-right: 3px double #a5a5ab;
}

.panel-head svg { width: 6px; height: 6px; fill: none; stroke: #555; }

.vscroll { background: #e9eaec; padding: 16px 2px 0 1px; }

.vscroll i {
  display: block;
  height: 51%;
  background: #a3a8ad;
  border: 1px solid #7f858a;
  border-radius: 2px;
}

.hscroll {
  grid-column: 1 / 3;
  margin-left: 8px;
  padding: 2px 17px 2px 8px;
  background: #ebecef;
  border-right: 3px double #b5b5ba;
}

.hscroll i {
  display: block;
  height: 5px;
  background: #a9adb2;
  border: 1px solid #888d92;
  border-radius: 2px;
}

.tree {
  margin: -1px 0 0;
  padding: 0 0 4px 13px;
  list-style: none;
  display: grid;
  grid-template-rows: repeat(31, minmax(0, 1fr));
  grid-auto-rows: 0;
  overflow: hidden;
  font-family: var(--narrow);
}

.tree li { display: flex; align-items: center; }

/* the row cut off by the scroll bar */
.tree li:last-child { align-items: flex-start; }

.tree svg { width: 12px; height: 12px; margin-right: 2px; flex: none; }

.tree span {
  padding: 0 1px;
  line-height: 9px;
  white-space: nowrap;
  background: #ececf1;
}

.cell {
  width: 9px;
  align-self: stretch;
  display: flex;
  align-items: center;
  flex: none;
  background: linear-gradient(var(--line), var(--line)) no-repeat 5px 0 / 0 100%;
}

.cell:nth-child(odd) { width: 10px; }

.cell.line { background-size: 1px 100%; }

.tree .node {
  width: 11px;
  background-image: linear-gradient(var(--line), var(--line)), linear-gradient(var(--line), var(--line));
  background-position: 5px 0, 5px 50%;
  background-size: 1px 100%, 6px 1px;
}

.tree .first { background-position: 5px 6px, 5px 50%; }

.tree .last { background-size: 1px 50%, 6px 1px; }

.box {
  width: 7px;
  height: 7px;
  margin-left: 2px;
  border: 1px solid #96999d;
  border-radius: 1px;
  background: linear-gradient(#444, #444) no-repeat center / 3px 1px #e6e7ea;
}

.box.closed {
  background:
    linear-gradient(#444, #444) no-repeat center / 5px 1px,
    linear-gradient(#444, #444) no-repeat center / 1px 5px,
    #d8d9dc;
}

.cursor {
  position: absolute;
  left: 75px;
  top: 219px;
  width: 14px;
  height: 22px;
}

/* section tabs */
.section-tabs {
  justify-self: center;
  align-self: end;
  height: 10px;
  margin-left: 9px;
  display: flex;
  position: relative;
  font-family: var(--narrow);
}

.section-tabs button {
  padding: 0 3px;
  font-size: 6px;
  line-height: 9px;
  white-space: nowrap;
  background: #d2d2d4;
  border: 1px solid #bdbdc1;
  border-left-width: 0;
}

.section-tabs .active { background: #f5f5f7; }

.section-tabs .first { border-left: 1px solid #4d91ad; }

/* action bar */
footer { background: #f1f0f2; }

.toolbar {
  height: 34px;
  margin: 0 20px 0 21px;
  display: flex;
  border: 1px solid #c6c6ca;
  border-bottom: none;
  border-radius: 3px 3px 0 0;
}

.grip {
  width: 9px;
  padding-top: 2px;
  display: flex;
  justify-content: center;
  border-right: 1px solid #c6c6ca;
}

.grip svg { width: 6px; height: 6px; fill: none; stroke: #666; }

.tools {
  flex: 1;
  display: flex;
  justify-content: space-between;
  padding-top: 3px;
}

.tool { width: 19px; height: 16px; }

.tool svg { width: 16px; height: 16px; margin: 0 auto; }

.fx { font: italic bold 15px/15px "Liberation Serif", serif; color: #222; }

.sep { width: 1px; height: 26px; margin: 0 1px; background: #cfcfd2; }

.drop, .more { width: 7px; height: 16px; display: grid; place-items: center; }

.drop::before {
  content: "";
  border: 2px solid transparent;
  border-top-color: #85878a;
  border-bottom: none;
}

.more { width: 5px; height: 26px; }

.more::before {
  content: "";
  border: 3px solid transparent;
  border-left-color: #77797c;
  border-right: none;
}

.status {
  height: 12px;
  display: flex;
  align-items: center;
  gap: 1px;
  padding: 0 1px 0 2px;
  font-family: var(--narrow);
  font-size: 6px;
}

.status input {
  width: 149px;
  height: 10px;
  margin-left: auto;
  padding: 0 2px;
  border: none;
  background: #fff;
}

.status button {
  width: 11px;
  height: 11px;
  border-right: 1px solid #aaa;
  border-bottom: 1px solid #aaa;
}

.status svg { width: 10px; height: 10px; }
```
